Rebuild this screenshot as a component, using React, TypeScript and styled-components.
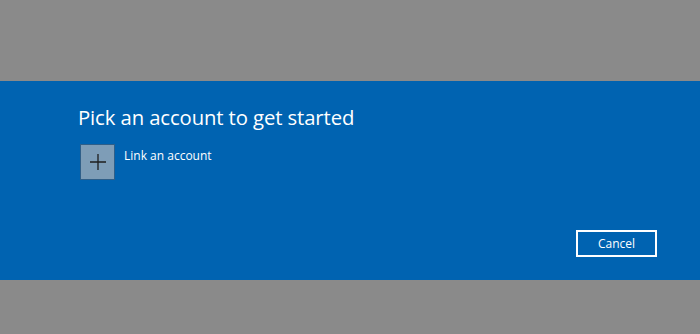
import React from "react";
import styled, { createGlobalStyle } from "styled-components";

const GlobalStyle = createGlobalStyle`
  html, body {
    margin: 0;
    padding: 0;
    background: #8a8a8a;
    font-family: "Segoe UI", "Open Sans", "Noto Sans", sans-serif;
  }
`;

const Screen = styled.div`
  width: 700px;
  height: 334px;
  display: flex;
  flex-direction: column;
  justify-content: flex-start;
  padding-top: 81px;
  box-sizing: border-box;
`;

const Dialog = styled.div`
  background: #0063b1;
  height: 199px;
  box-sizing: border-box;
  padding: 22px 43px 23px 78px;
  display: flex;
  flex-direction: column;
  color: #fff;
`;

const Title = styled.h1`
  margin: 0;
  font-size: 20.3px;
  font-weight: 400;
  line-height: 28px;
  letter-spacing: -0.1px;
`;

const AccountList = styled.div`
  margin-top: 13px;
  display: flex;
  flex-direction: column;
  gap: 8px;
`;

const AccountRow = styled.button`
  display: flex;
  align-items: flex-start;
  gap: 9px;
  background: none;
  border: none;
  padding: 0 0 0 2px;
  color: #fff;
  font-family: inherit;
  cursor: pointer;
  text-align: left;
`;

const Tile = styled.span`
  width: 35px;
  height: 36px;
  box-sizing: border-box;
  background: #7e9db7;
  border: 1px solid #2f5f89;
  display: flex;
  align-items: center;
  justify-content: center;
  color: #1e1e1e;
`;

const Label = styled.span`
  font-size: 12px;
  line-height: 16px;
  margin-top: 4px;
`;

const Footer = styled.div`
  margin-top: auto;
  display: flex;
  justify-content: flex-end;
`;

const CancelButton = styled.button`
  width: 81px;
  height: 27px;
  box-sizing: border-box;
  background: transparent;
  border: 2px solid #fff;
  color: #fff;
  font-family: inherit;
  font-size: 12px;
  cursor: pointer;
`;

const PlusIcon = () => (
  <svg width="18" height="18" viewBox="0 0 18 18">
    <path d="M9 1 V17 M1 9 H17" stroke="currentColor" strokeWidth="1.3" fill="none" />
  </svg>
);

export default function App() {
  return (
    <>
      <GlobalStyle />
      <Screen>
        <Dialog>
          <Title>Pick an account to get started</Title>
          <AccountList>
            <AccountRow>
              <Tile>
                <PlusIcon />
              </Tile>
              <Label>Link an account</Label>
            </AccountRow>
          </AccountList>
          <Footer>
            <CancelButton>Cancel</CancelButton>
          </Footer>
        </Dialog>
      </Screen>
    </>
  );
}
